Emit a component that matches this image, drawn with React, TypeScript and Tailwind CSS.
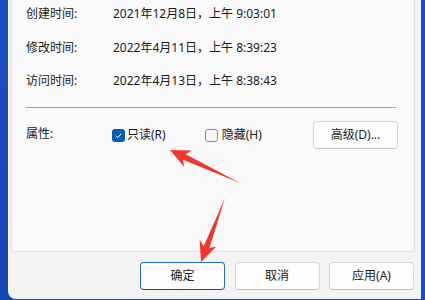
const font = {
  fontFamily: '"Noto Sans", "Noto Sans CJK SC", sans-serif',
};

const rows = [
  { label: "创建时间:", value: "2021年12月8日，上午 9:03:01" },
  { label: "修改时间:", value: "2022年4月11日，上午 8:39:23" },
  { label: "访问时间:", value: "2022年4月13日，上午 8:38:43" },
];

function Btn({ children, primary }: { children: React.ReactNode; primary?: boolean }) {
  return (
    <div
      className={
        "w-[85px] h-[28px] flex items-center justify-center rounded-[4px] text-[12px] text-[#1a1a1a] " +
        (primary
          ? "border border-[#1f6fc5] border-b-[#0a4f9a] bg-[#fdfdfd]"
          : "border border-[#d6d6d6] border-b-[#c2c2c2] bg-[#fdfdfd]")
      }
    >
      {children}
    </div>
  );
}

export default function App() {
  return (
    <div
      className="relative w-[425px] h-[300px] flex bg-gradient-to-b from-[#1d4fc4] to-[#1546b8] overflow-hidden"
      style={font}
    >
      <div className="w-[8px] shrink-0" />
      <div className="w-[413px] h-[299px] bg-[#f3f3f3] rounded-bl-[8px] border-l border-[#fbfbfb] flex flex-col">
        {/* tab panel */}
        <div className="ml-[2px] mr-[6px] h-[252px] bg-[#f9f9f9] border-x border-b border-[#e3e3e3] rounded-b-[3px] flex flex-col px-[14px]">
          <div className="flex flex-col pt-[4px] gap-[13.5px]">
            {rows.map((r) => (
              <div key={r.label} className="flex items-center h-[20px] text-[12px] text-[#1a1a1a]">
                <div className="w-[87px]">{r.label}</div>
                <div>{r.value}</div>
              </div>
            ))}
          </div>
          <div className="mt-[16px] mr-[4px] h-px bg-[#a3a3a3]" />
          <div className="mt-[13px] flex items-center h-[28px] text-[12px] text-[#1a1a1a]">
            <div className="w-[86px] -mt-[3px]">属性:</div>
            <div className="flex items-center gap-[2px]">
              <div className="w-[13px] h-[13px] rounded-[3px] bg-[#005fb8] flex items-center justify-center">
                <svg width="9" height="9" viewBox="0 0 10 10">
                  <path d="M2 5.2 L4.2 7.3 L8.2 2.8" fill="none" stroke="#fff" strokeWidth="1.1" />
                </svg>
              </div>
              <span>只读(R)</span>
            </div>
            <div className="ml-[39px] flex items-center gap-[4px]">
              <div className="w-[13px] h-[13px] rounded-[3px] border border-[#8d8d8d] bg-[#f6f6f6]" />
              <span>隐藏(H)</span>
            </div>
            <div className="ml-auto mr-[2px]">
              <div className="w-[85px] h-[28px] flex items-center justify-center rounded-[4px] border border-[#d6d6d6] border-b-[#c2c2c2] bg-[#fdfdfd]">
                高级(D)...
              </div>
            </div>
          </div>
        </div>
        {/* footer buttons */}
        <div className="flex justify-end gap-[9.5px] pt-[10px] pr-[7px]">
          <Btn primary>确定</Btn>
          <Btn>取消</Btn>
          <Btn>应用(A)</Btn>
        </div>
      </div>
      <div className="flex-1 bg-[#0f4fd8]" />

      {/* red annotation arrows */}
      <svg className="absolute left-0 top-0 pointer-events-none" width="425" height="300">
        <polygon
          points="170,150 184.1,166.8 183.1,159.7 240,183 185.7,154.3 191.9,150.6"
          fill="#f2362c"
        />
        <polygon
          points="201,262 216.4,246.5 209.4,248.1 225,198 203.8,245.9 199.6,240.1"
          fill="#f2362c"
        />
      </svg>
    </div>
  );
}
